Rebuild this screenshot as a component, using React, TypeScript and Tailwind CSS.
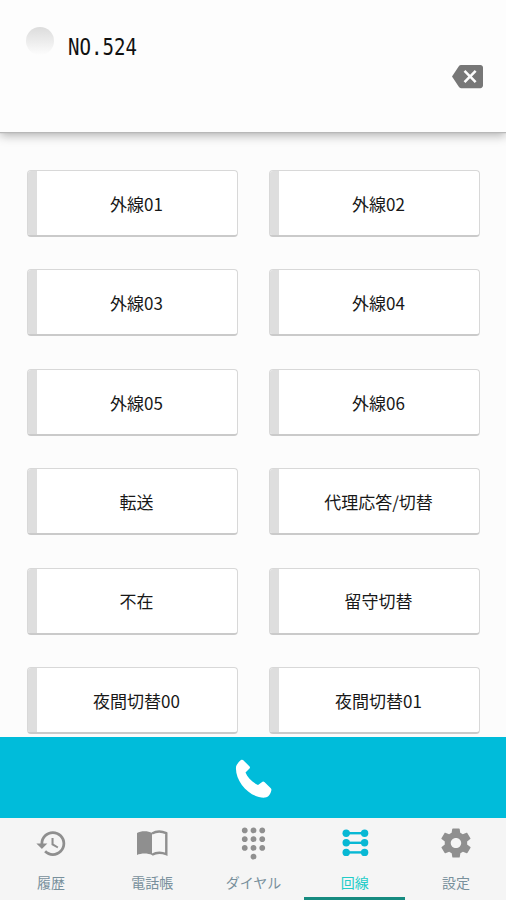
import { useState, type ReactNode } from 'react';
import { IoMdSettings } from 'react-icons/io';
import { MdBackspace, MdDialpad, MdHistory } from 'react-icons/md';

const LINES = [
  '外線01',
  '外線02',
  '外線03',
  '外線04',
  '外線05',
  '外線06',
  '転送',
  '代理応答/切替',
  '不在',
  '留守切替',
  '夜間切替00',
  '夜間切替01',
];

function PhoneIcon() {
  return (
    <svg width="50" height="50" viewBox="0 0 50 50" fill="currentColor">
      <path d="M8 14C8.3 11.5 12 7.5 13.5 6.8Q14.5 6.4 15.3 7.2L21.6 13.5Q22.4 14.5 21.5 15.4L17.5 19.5C19.5 24.4 24 29.2 30 32L34.5 28.8Q35.5 28.2 36.4 29.1L42.8 35.2Q43.7 36.2 43.3 37.6C42.5 41 41 44 37 44.6C22 45.4 7 28.4 8 14Z" />
    </svg>
  );
}

function BookIcon() {
  return (
    <svg width="32" height="27" viewBox="0 0 32 27" fill="none">
      <path d="M1 3C5 .5 12 .5 16 3V25C12 23 5 23 1 25Z" fill="currentColor" />
      <path d="M16 3.5C20 1.2 26 1.2 30.3 3.2V24.2C26 22.5 20 22.5 16 24.8" stroke="currentColor" strokeWidth="2.4" />
    </svg>
  );
}

function LinesIcon() {
  return (
    <svg width="28" height="28" viewBox="0 0 28 28" fill="currentColor">
      {[4.2, 13.8, 23.4].map((y) => (
        <g key={y}>
          <rect x="4" y={y - 1.2} width="20" height="2.4" />
          <circle cx="5.2" cy={y} r="3.7" />
          <circle cx="23.6" cy={y} r="3.7" />
        </g>
      ))}
    </svg>
  );
}

const TABS: { key: string; label: string; icon: ReactNode }[] = [
  { key: 'history', label: '履歴', icon: <MdHistory size={33} /> },
  { key: 'contacts', label: '電話帳', icon: <BookIcon /> },
  { key: 'dial', label: 'ダイヤル', icon: <MdDialpad size={35} /> },
  { key: 'lines', label: '回線', icon: <LinesIcon /> },
  { key: 'settings', label: '設定', icon: <IoMdSettings size={36} /> },
];

function LineButton({ label }: { label: string }) {
  return (
    <button className="flex h-[67px] overflow-hidden rounded-[4px] border border-b-2 border-[#d8d8d8] border-b-[#cacaca] bg-white text-[17px] text-[#181818]">
      <span className="h-full w-[9px] shrink-0 bg-[#dedede]" />
      <span className="flex h-full flex-1 items-center justify-center pt-[1px] pr-[1px] whitespace-nowrap">
        {label}
      </span>
    </button>
  );
}

export default function App() {
  const [tab, setTab] = useState('lines');

  return (
    <div className="flex h-[900px] w-[506px] flex-col overflow-hidden bg-[#fcfcfc] font-['Noto_Sans_CJK_JP',sans-serif]">
      <header className="relative z-10 flex h-[132px] shrink-0 justify-between bg-[#fdfdfd] pr-[23px] pl-[26px] shadow-[0_1px_1px_#b8b8b8,0_3px_10px_#aaaaaa]">
        <div className="flex pt-[27px]">
          <span className="h-[28px] w-[28px] rounded-full bg-linear-to-b from-[#dcdcdc] via-[#ececec] to-[#fdfdfd]" />
          <p className="ml-[14px] origin-left scale-x-[0.83] pt-[6px] font-['DejaVu_Sans_Mono',monospace] text-[23px] leading-[28px] text-[#111111]">
            NO.524
          </p>
        </div>
        <button className="mt-[60px] h-[32px] text-[#777777]">
          <MdBackspace size={31} />
        </button>
      </header>

      <main className="grid min-h-0 flex-1 grid-cols-2 content-start gap-x-[31px] gap-y-[32.4px] overflow-hidden pt-[38px] pr-[26px] pl-[27px]">
        {LINES.map((label) => (
          <LineButton key={label} label={label} />
        ))}
      </main>

      <button className="flex h-[81px] shrink-0 items-center justify-center bg-[#00bcda] text-white">
        <PhoneIcon />
      </button>

      <nav className="grid h-[82px] shrink-0 grid-cols-5 bg-[#f5f5f5]">
        {TABS.map((item) => {
          const active = item.key === tab;
          return (
            <button
              key={item.key}
              onClick={() => setTab(item.key)}
              className={`flex flex-col items-center border-b-[3px] pt-[7px] pl-[1px] ${active ? 'border-[#168b80]' : 'border-transparent'}`}
            >
              <span className={`flex h-[36px] items-center ${active ? 'text-[#08b8d4]' : 'text-[#8f8f8f]'}`}>
                {item.icon}
              </span>
              <span className={`mt-[11px] text-[14px] leading-[20px] ${active ? 'text-[#22ccc8]' : 'text-[#78909c]'}`}>
                {item.label}
              </span>
            </button>
          );
        })}
      </nav>
    </div>
  );
}
